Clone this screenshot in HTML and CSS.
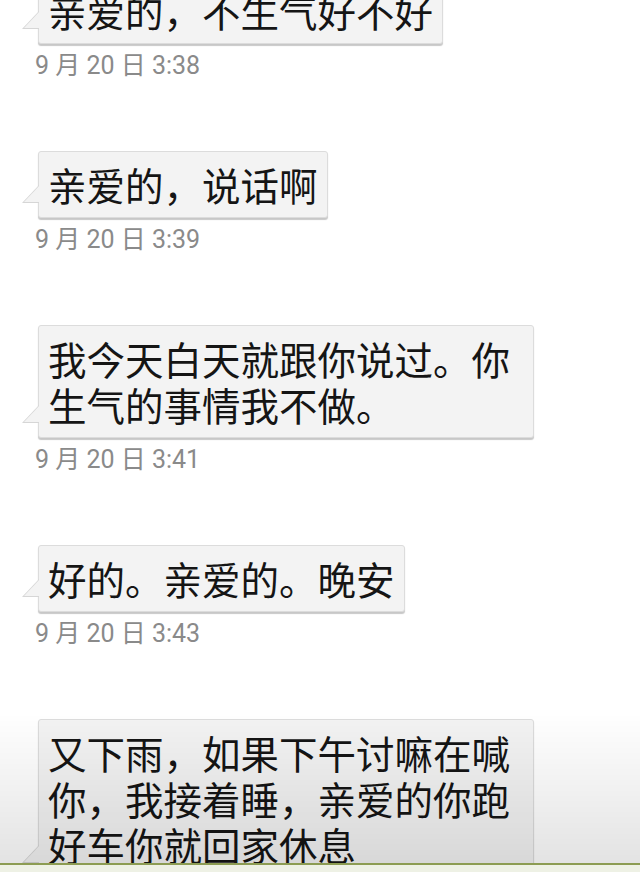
FILE: index.html
```html
<!DOCTYPE html>
<html lang="zh-CN">
<head>
<meta charset="utf-8">
<title>聊天记录</title>
<link rel="stylesheet" href="styles.css">
</head>
<body>
<div class="chat">
  <div class="msg">
    <div class="bubble">亲爱的，不生气好不好</div>
    <div class="time">9 月 20 日 3:38</div>
  </div>
  <div class="msg">
    <div class="bubble">亲爱的，说话啊</div>
    <div class="time">9 月 20 日 3:39</div>
  </div>
  <div class="msg">
    <div class="bubble">我今天白天就跟你说过。你生气的事情我不做。</div>
    <div class="time">9 月 20 日 3:41</div>
  </div>
  <div class="msg">
    <div class="bubble">好的。亲爱的。晚安</div>
    <div class="time">9 月 20 日 3:43</div>
  </div>
  <div class="msg">
    <div class="bubble">又下雨，如果下午讨嘛在喊你，我接着睡，亲爱的你跑好车你就回家休息</div>
  </div>
</div>
<div class="fade"></div>
<div class="bottombar"></div>
</body>
</html>
```
FILE: styles.css
```css
html, body {
  margin: 0;
  padding: 0;
  background: #ffffff;
  height: 100%;
  overflow: hidden;
}

.chat {
  margin-top: -23px;
  padding-left: 38px;
  display: flex;
  flex-direction: column;
}

.msg {
  display: flex;
  flex-direction: column;
  align-items: flex-start;
  margin-bottom: 71px;
}

.bubble {
  position: relative;
  box-sizing: border-box;
  max-width: 496px;
  padding: 9px 9px 10px 9px;
  background: #f3f3f3;
  border: 1px solid #dcdcdc;
  border-radius: 3px;
  box-shadow: 0 2px 1px rgba(0, 0, 0, 0.22);
  font-family: "Noto Sans CJK SC", sans-serif;
  font-size: 38.5px;
  line-height: 46px;
  color: #151515;
}

.bubble::before,
.bubble::after {
  content: "";
  position: absolute;
  width: 0;
  height: 0;
}

.bubble::before {
  left: -17px;
  bottom: 14px;
  border-top: 18px solid transparent;
  border-right: 17px solid #d6d6d6;
}

.bubble::after {
  left: -15px;
  bottom: 15px;
  border-top: 17px solid transparent;
  border-right: 16px solid #f3f3f3;
}

.time {
  margin-top: 8px;
  margin-left: -3px;
  font-family: "Roboto", "Noto Sans CJK SC", sans-serif;
  font-size: 25px;
  line-height: 28px;
  color: #8a8a8a;
}

.fade {
  position: fixed;
  left: 0;
  right: 0;
  bottom: 9px;
  height: 150px;
  background: linear-gradient(to bottom, rgba(0, 0, 0, 0), rgba(0, 0, 0, 0.11));
  pointer-events: none;
}

.bottombar {
  position: fixed;
  left: 0;
  right: 0;
  bottom: 0;
  height: 7px;
  border-top: 2px solid #8c9c52;
  background: #eef1e5;
}
```
